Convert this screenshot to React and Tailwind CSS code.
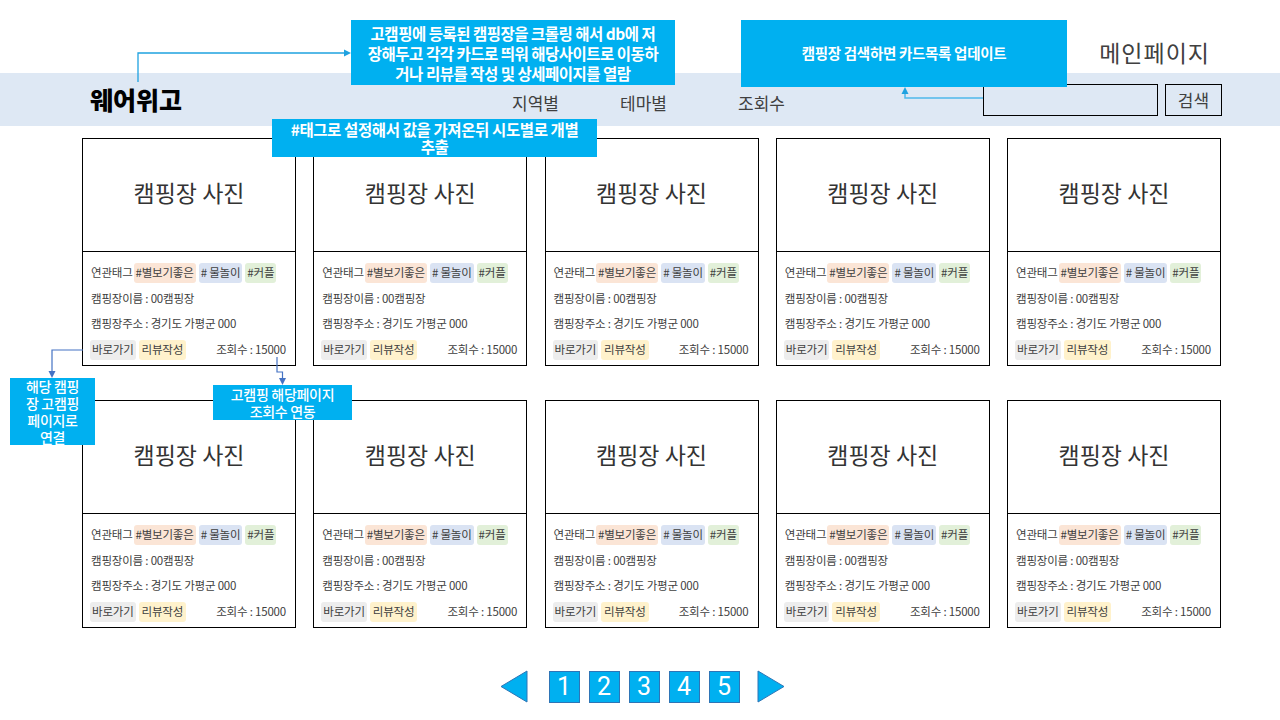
const font = "font-['Noto_Sans_CJK_KR','Noto_Sans',sans-serif]"

function Card() {
  return (
    <div className="w-[214px] h-[228px] border border-black flex flex-col bg-white">
      <div className="h-[113px] border-b border-black flex items-center justify-center pb-[5px] text-[23px] text-[#333]">
        캠핑장 사진
      </div>
      <div className="flex flex-col gap-[5.5px] pt-[11px] px-[7px] text-[11.5px] text-[#404040] tracking-[-0.2px]">
        <div className="h-[20px] flex items-center">
          <span className="px-[1px]">연관태그</span>
          <span className="bg-[#fbe5d6] rounded-[3px] px-[2px] h-[20px] flex items-center">#별보기좋은</span>
          <span className="bg-[#dae3f3] rounded-[3px] px-[2px] h-[20px] flex items-center ml-[3px]">#&nbsp;물놀이</span>
          <span className="bg-[#e2f0d9] rounded-[3px] px-[2px] h-[20px] flex items-center ml-[3px]">#커플</span>
        </div>
        <div className="h-[20px] flex items-center px-[1px]">캠핑장이름 : 00캠핑장</div>
        <div className="h-[20px] flex items-center px-[1px]">캠핑장주소 : 경기도 가평군 000</div>
        <div className="h-[20px] flex items-center">
          <span className="bg-[#ededed] rounded-[3px] px-[2px] h-[20px] flex items-center">바로가기</span>
          <span className="bg-[#fff2cc] rounded-[3px] px-[3px] h-[20px] flex items-center ml-[3px]">리뷰작성</span>
          <span className="ml-auto pr-[2px]">조회수 : 15000</span>
        </div>
      </div>
    </div>
  )
}

function Note({ className, children }) {
  return (
    <div
      className={`absolute bg-[#00b0f0] text-white flex flex-col items-center justify-center text-center ${className}`}
    >
      {children}
    </div>
  )
}

export default function App() {
  return (
    <div className={`relative w-[1280px] h-[720px] overflow-hidden bg-white ${font}`}>
      <div className="h-[73px] flex justify-end items-end pr-[70px] pb-[6px]">
        <span className="text-[23px] leading-[30px] text-[#404040] tracking-[1px]">메인페이지</span>
      </div>

      <div className="h-[53px] bg-[#dee8f4] flex items-center pl-[90px]">
        <div className="w-[422px] text-[25px] font-black text-black">웨어위고</div>
        <div className="w-[108px] text-[17px] text-[#404040] pt-[6px]">지역별</div>
        <div className="w-[118px] text-[17px] text-[#404040] pt-[6px]">테마별</div>
        <div className="w-[245px] text-[17px] text-[#404040] pt-[6px]">조회수</div>
        <div className="w-[175px] h-[32px] border border-black"></div>
        <div className="ml-[7px] w-[57px] h-[32px] border border-black flex items-center justify-center text-[17px] text-[#404040]">
          검색
        </div>
      </div>

      <div className="mt-[12px] pl-[82px] grid grid-cols-[repeat(5,214px)] gap-x-[17.25px] gap-y-[34px]">
        {Array.from({ length: 10 }).map((_, i) => (
          <Card key={i} />
        ))}
      </div>

      <div className="mt-[42px] flex items-center justify-center pl-[4px]">
        <svg width="28" height="33" viewBox="0 0 28 33">
          <polygon points="27,1 1,16.5 27,32" fill="#00b0f0" stroke="#2e75b6" strokeWidth="1" />
        </svg>
        <div className="flex gap-[9px] ml-[21px] mr-[17px]">
          {[1, 2, 3, 4, 5].map((n) => (
            <div
              key={n}
              className="w-[31px] h-[32px] bg-[#00b0f0] border border-[#2e75b6] flex items-center justify-center text-white text-[25px] leading-none font-['Roboto',sans-serif]"
            >
              {n}
            </div>
          ))}
        </div>
        <svg width="28" height="33" viewBox="0 0 28 33">
          <polygon points="1,1 27,16.5 1,32" fill="#00b0f0" stroke="#2e75b6" strokeWidth="1" />
        </svg>
      </div>

      {/* annotation connectors */}
      <svg className="absolute left-0 top-0 pointer-events-none" width="1280" height="720">
        <path d="M138 82 V53 H344" fill="none" stroke="#1fa2e0" strokeWidth="1.3" />
        <polygon points="344,49.5 351,53 344,56.5" fill="#1fa2e0" />
        <path d="M983 98 H905 V93" fill="none" stroke="#4fb8ea" strokeWidth="1.5" />
        <polygon points="901.5,94 905,87 908.5,94" fill="#1fa2e0" />
        <path d="M83 350 H52 V372" fill="none" stroke="#4472c4" strokeWidth="1.2" />
        <polygon points="48.5,371 52,378 55.5,371" fill="#4472c4" />
        <path d="M277 357 V372 H282.5 V379" fill="none" stroke="#4472c4" strokeWidth="1.2" />
        <polygon points="279,378 282.5,385 286,378" fill="#4472c4" />
      </svg>

      <Note className="left-[351px] top-[20px] w-[324px] h-[65px] text-[15.5px] font-bold leading-[20px] tracking-[-0.5px]">
        <div>고캠핑에 등록된 캠핑장을 크롤링 해서 db에 저</div>
        <div>장해두고 각각 카드로 띄워 해당사이트로 이동하</div>
        <div>거나 리뷰를 작성 및 상세페이지를 열람</div>
      </Note>
      <Note className="left-[741px] top-[20px] w-[326px] h-[67px] text-[14.5px] font-bold tracking-[-0.3px] pb-[2px]">
        캠핑장 검색하면 카드목록 업데이트
      </Note>
      <Note className="left-[272px] top-[119px] w-[325px] h-[38px] text-[15.5px] font-bold leading-[17px] tracking-[-0.4px]">
        <div>#태그로 설정해서 값을 가져온뒤 시도별로 개별</div>
        <div>추출</div>
      </Note>
      <Note className="left-[10px] top-[378px] w-[85px] h-[67px] text-[14px] font-medium leading-[17px] tracking-[-0.3px]">
        <div>해당 캠핑</div>
        <div>장 고캠핑</div>
        <div>페이지로</div>
        <div>연결</div>
      </Note>
      <Note className="left-[213px] top-[385px] w-[139px] h-[35px] text-[14px] font-medium leading-[17px] tracking-[-0.3px]">
        <div>고캠핑 해당페이지</div>
        <div>조회수 연동</div>
      </Note>
    </div>
  )
}
